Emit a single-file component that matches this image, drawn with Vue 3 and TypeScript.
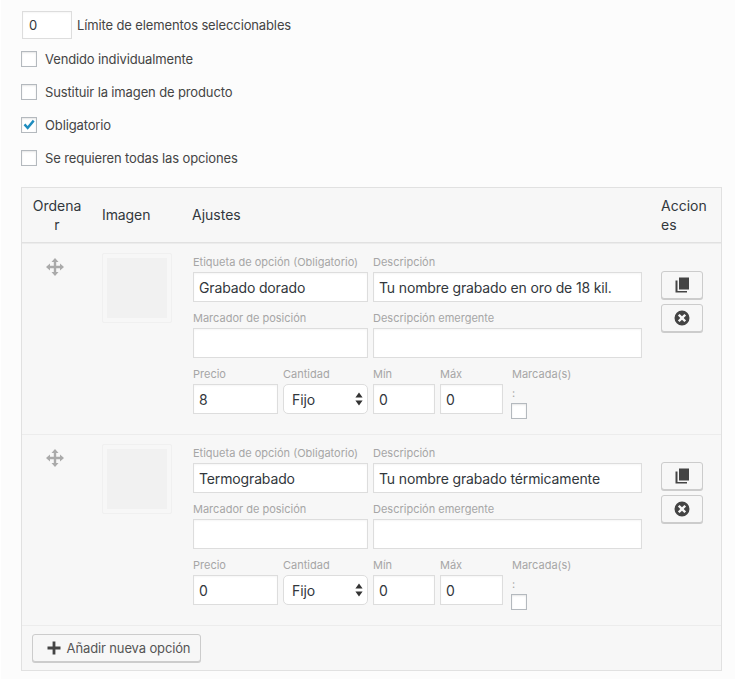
<script setup lang="ts">
interface Opt { label: string; desc: string; price: string }
const options: Opt[] = [
  { label: 'Grabado dorado', desc: 'Tu nombre grabado en oro de 18 kil.', price: '8' },
  { label: 'Termograbado', desc: 'Tu nombre grabado térmicamente', price: '0' },
]
const checks = [
  { text: 'Vendido individualmente', on: false },
  { text: 'Sustituir la imagen de producto', on: false },
  { text: 'Obligatorio', on: true },
  { text: 'Se requieren todas las opciones', on: false },
]
</script>

<template>
  <div class="page">
    <div class="limit">
      <input class="field limit-input" value="0" />
      <span>Límite de elementos seleccionables</span>
    </div>
    <label v-for="c in checks" :key="c.text" class="check-row">
      <span class="box">
        <svg v-if="c.on" viewBox="0 0 16 16" width="16" height="16"><path d="M2.6 8.2 L4.4 6.6 L6.6 9 L11.8 2.8 L13.6 4.4 L6.7 12.8 Z" fill="#1e8cbe" /></svg>
      </span>
      <span>{{ c.text }}</span>
    </label>

    <div class="table">
      <div class="head">
        <div class="h-order">Ordena<br />r</div>
        <div class="h-image">Imagen</div>
        <div class="h-settings">Ajustes</div>
        <div class="h-actions">Accion<br />es</div>
      </div>

      <div v-for="o in options" :key="o.label" class="row">
        <div class="drag">
          <svg viewBox="0 0 18 18" width="18" height="18"><path d="M9 0 L12.5 4 L10.2 4 L10.2 7.8 L14 7.8 L14 5.5 L18 9 L14 12.5 L14 10.2 L10.2 10.2 L10.2 14 L12.5 14 L9 18 L5.5 14 L7.8 14 L7.8 10.2 L4 10.2 L4 12.5 L0 9 L4 5.5 L4 7.8 L7.8 7.8 L7.8 4 L5.5 4 Z" fill="#aaa" /></svg>
        </div>
        <div class="thumb"><div class="thumb-inner"></div></div>
        <div class="settings">
          <div class="cell w175">
            <label>Etiqueta de opción (Obligatorio)</label>
            <input class="field" :value="o.label" />
          </div>
          <div class="cell w269">
            <label>Descripción</label>
            <input class="field" :value="o.desc" />
          </div>
          <div class="cell w175">
            <label>Marcador de posición</label>
            <input class="field" />
          </div>
          <div class="cell w269">
            <label>Descripción emergente</label>
            <input class="field" />
          </div>
          <div class="cell w85">
            <label>Precio</label>
            <input class="field" :value="o.price" />
          </div>
          <div class="cell w85">
            <label>Cantidad</label>
            <div class="select">
              <span>Fijo</span>
              <svg viewBox="0 0 8 14" width="8" height="14"><path d="M4 0.5 L7.6 5.6 L0.4 5.6 Z M4 13.5 L7.6 8.4 L0.4 8.4 Z" fill="#333" /></svg>
            </div>
          </div>
          <div class="cell w62">
            <label>Mín</label>
            <input class="field" value="0" />
          </div>
          <div class="cell w63">
            <label>Máx</label>
            <input class="field" value="0" />
          </div>
          <div class="cell marked">
            <label>Marcada(s)<br />:</label>
            <span class="box"></span>
          </div>
        </div>
        <div class="actions">
          <button class="btn icon-btn" type="button">
            <svg viewBox="0 0 16 16" width="16" height="16"><path d="M5 0.5 H15 V12.5 H5 Z M1.5 3.5 H3.5 V14 H13 V15.5 H1.5 Z" fill="#444" /></svg>
          </button>
          <button class="btn icon-btn" type="button">
            <svg viewBox="0 0 16 16" width="16" height="16"><path fill-rule="evenodd" d="M8 0.5 A7.5 7.5 0 1 1 8 15.5 A7.5 7.5 0 1 1 8 0.5 Z M5.6 3.9 L3.9 5.6 L6.3 8 L3.9 10.4 L5.6 12.1 L8 9.7 L10.4 12.1 L12.1 10.4 L9.7 8 L12.1 5.6 L10.4 3.9 L8 6.3 Z" fill="#444" /></svg>
          </button>
        </div>
      </div>

      <div class="foot">
        <button class="btn add-btn" type="button">
          <svg viewBox="0 0 14 14" width="14" height="14"><path d="M5.6 0.5 H8.4 V5.6 H13.5 V8.4 H8.4 V13.5 H5.6 V8.4 H0.5 V5.6 H5.6 Z" fill="#444" /></svg>
          <span>Añadir nueva opción</span>
        </button>
      </div>
    </div>
  </div>
</template>

<style>
html, body { background: #fcfcfc; }
</style>

<style scoped>
.page {
  width: 735px;
  height: 679px;
  box-sizing: border-box;
  padding: 11px 0 0 20px;
  background: #fcfcfc;
  border-left: 1px solid #fff;
  font-family: "Inter", "Liberation Sans", sans-serif;
  font-size: 13px;
  letter-spacing: -0.13px;
  color: #444;
  overflow: hidden;
}
.limit {
  display: flex;
  align-items: center;
  gap: 5px;
  height: 28px;
  margin-left: 1px;
}
.field {
  box-sizing: border-box;
  width: 100%;
  height: 30px;
  padding: 0 5px;
  margin: 0;
  border: 1px solid #ddd;
  border-radius: 0;
  background: #fff;
  font: inherit;
  font-size: 14px;
  letter-spacing: -0.14px;
  color: #32373c;
  outline: none;
  box-shadow: inset 0 1px 2px rgba(0, 0, 0, 0.04);
}
.field.limit-input { width: 50px; height: 28px; flex: none; font-size: 13px; padding: 0 6px; }
.limit span { white-space: nowrap; }
.check-row {
  display: flex;
  align-items: center;
  gap: 8px;
  height: 16px;
  margin-top: 17px;
}
.check-row:first-of-type { margin-top: 12px; }
.box {
  display: block;
  box-sizing: border-box;
  width: 16px;
  height: 16px;
  border: 1px solid #b4b9be;
  background: #fff;
  flex: none;
  box-shadow: inset 0 1px 2px rgba(0, 0, 0, 0.1);
}
.box svg { display: block; margin: -1px; }
.table {
  box-sizing: border-box;
  width: 701px;
  margin-top: 21px;
  border: 1px solid #e1e1e1;
  background: #f7f7f7;
}
.head {
  display: grid;
  grid-template-columns: 80px 90px 469px 60px;
  align-items: center;
  height: 55px;
  box-sizing: border-box;
  border-bottom: 1px solid #e1e1e1;
  font-size: 14px;
  line-height: 19px;
  letter-spacing: 0;
  color: #32373c;
}
.h-order { text-align: center; width: 64px; margin-left: 3px; }
.h-image { margin-top: -1px; letter-spacing: -0.1px; }
.h-settings { margin-top: -1px; }
.row {
  display: grid;
  grid-template-columns: 80px 90px 469px 60px;
  height: 191px;
  box-sizing: border-box;
  border-top: 1px solid #ececec;
  padding-top: 9px;
}
.drag { padding: 5px 0 0 23.5px; }
.drag svg { display: block; }
.thumb {
  box-sizing: border-box;
  width: 70px;
  height: 70px;
  padding: 4px;
  border: 1px solid #f0f0f0;
  border-radius: 2px;
}
.thumb-inner { width: 100%; height: 100%; background: #f1f1f1; }
.settings {
  display: flex;
  flex-wrap: wrap;
  align-content: flex-start;
  column-gap: 5px;
  row-gap: 10px;
  margin: 3px 0 0 1px;
  width: 460px;
}
.cell label {
  display: block;
  font-size: 11px;
  line-height: 13px;
  height: 13px;
  margin-bottom: 3px;
  letter-spacing: 0;
  color: #a6a6a6;
  white-space: nowrap;
}
.w175 { width: 175px; }
.w269 { width: 269px; }
.w85 { width: 85px; }
.w62 { width: 62px; }
.w63 { width: 63px; }
.marked { margin-left: 4px; width: 60px; }
.marked label { height: auto; line-height: 19px; margin-bottom: 0; margin-top: -3px; }
.marked .box { margin: 0 0 0 -1px; }
.select {
  box-sizing: border-box;
  height: 30px;
  display: flex;
  align-items: center;
  justify-content: space-between;
  padding: 0 4px 0 8px;
  border: 1px solid #ddd;
  border-radius: 5px;
  background: #fff;
  font-size: 14px;
  color: #32373c;
}
.actions {
  display: flex;
  flex-direction: column;
  gap: 5px;
  padding-top: 18px;
}
.btn {
  box-sizing: border-box;
  border: 1px solid #ccc;
  border-radius: 3px;
  background: #f7f7f7;
  box-shadow: 0 1px 0 #ccc;
  color: #555;
  font: inherit;
  padding: 0;
  display: flex;
  align-items: center;
  justify-content: center;
}
.icon-btn { width: 42px; height: 28px; }
.foot {
  height: 45px;
  box-sizing: border-box;
  border-top: 1px solid #ececec;
  padding: 8px 0 0 10px;
}
.add-btn {
  width: 169px;
  height: 28px;
  gap: 6px;
  font-size: 13px;
  letter-spacing: -0.13px;
  padding-left: 4px;
}
</style>
